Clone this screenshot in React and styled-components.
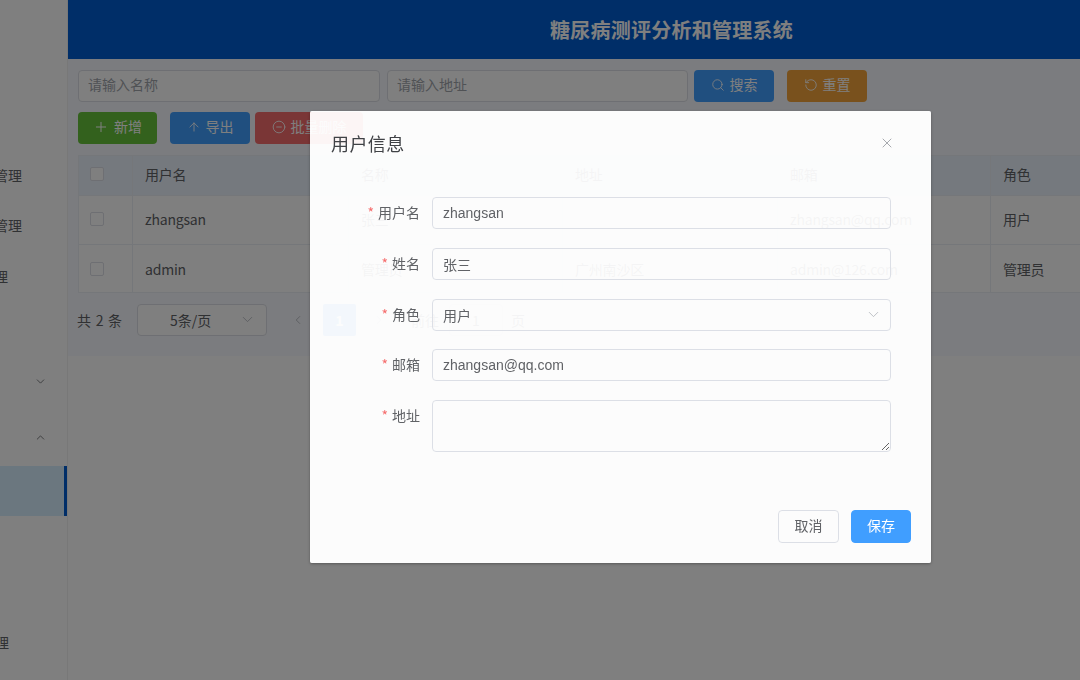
import React from 'react';
import styled, { createGlobalStyle } from 'styled-components';
import { Plus, ArrowUp, CircleMinus, Search, RotateCcw, ChevronDown, ChevronUp, ChevronLeft, ChevronRight, X } from 'lucide-react';

const Global = createGlobalStyle`
  html, body { margin: 0; padding: 0; width: 1080px; height: 680px; overflow: hidden; background: #fff; }
  * { box-sizing: border-box; }
  body, input, textarea, button { font-family: "Noto Sans CJK SC", "Noto Sans", sans-serif; }
`;

const Page = styled.div`display: flex; width: 1080px; height: 680px; overflow: hidden;`;

const Sidebar = styled.aside`
  flex: 0 0 68px; height: 680px; padding-top: 151px; background: #fff; border-right: 1px solid #f0f0f0;
  overflow: hidden; color: #606266; font-size: 14px;
`;
const MenuItem = styled.div`
  display: flex; align-items: center; justify-content: flex-end; white-space: nowrap;
  height: ${p => p.$h || 50}px; margin-top: ${p => p.$top || 0}px;
  padding: 0 ${p => p.$pr || 0}px ${p => p.$pb || 0}px 0;
  ${p => p.$active && 'background: #d6efff; border-right: 3px solid #005cd0;'}
`;

const Main = styled.main`flex: 1; min-width: 0; display: flex; flex-direction: column;`;
const Header = styled.header`
  flex: 0 0 59px; display: flex; align-items: center; justify-content: center; padding: 0 0 1px 195px;
  background: #005cd0; color: #fff; font-size: 20px; font-weight: 700; letter-spacing: .25px; white-space: nowrap;
`;
const Content = styled.section`
  background: #f7f9fe; height: 297px; padding: 11px 0 0 10px; overflow: hidden;
`;
const SearchRow = styled.div`display: flex; align-items: center; height: 32px;`;
const PageInput = styled.input`
  flex: 0 0 ${p => p.$w}px; height: 32px; margin-right: ${p => p.$mr}px; padding: 0 9px 5px;
  border: 1px solid #dcdfe6; border-radius: 4px; background: #fff; font-size: 14px; color: #606266; outline: none;
  &::placeholder { color: #a0a4ab; }
`;
const Btn = styled.button`
  display: inline-flex; align-items: center; justify-content: center; gap: 5px;
  height: 32px; width: ${p => p.$w}px; margin-right: ${p => p.$mr || 0}px; padding: 0 0 5px;
  border: 0; border-radius: 4px; background: ${p => p.$bg}; color: #fff; font-size: 14px; white-space: nowrap;
  & > svg { margin-top: 3px; }
`;
const ActionRow = styled(SearchRow)`margin-top: 10px;`;

const Table = styled.div`
  margin-top: 11px; width: 1126px; display: grid; grid-template-columns: 54px 216px 214px 215px 213px 214px;
  border-top: 1px solid #ebeef5; border-left: 1px solid #ebeef5; color: #606266; font-size: 14px;
`;
const Cell = styled.div`
  display: flex; align-items: center; height: ${p => p.$h}px; padding: 0 12px ${p => p.$pb}px;
  background: ${p => p.$head ? '#eaf3fd' : '#fff'};
  border-right: 1px solid #ebeef5; border-bottom: 1px solid #ebeef5; white-space: nowrap; letter-spacing: -.2px;
`;
const Check = styled.span`
  display: block; width: 14px; height: 14px; margin: 0 0 0 -1px; border: 1px solid #dcdfe6; border-radius: 2px; background: #fff;
`;

const Pager = styled.div`display: flex; align-items: center; height: 32px; margin-top: 11px; color: #606266; font-size: 14px;`;
const Total = styled.span`flex: 0 0 60px; margin: 0 0 1px -1px; white-space: nowrap; word-spacing: 1.5px;`;
const SizeSelect = styled.div`
  flex: 0 0 130px; height: 32px; display: flex; align-items: center; justify-content: space-between;
  padding: 0 10px 1px 32px; border: 1px solid #dcdfe6; border-radius: 4px; background: #fff;
`;
const Arrow = styled.span`display: flex; color: #b4b7bd; margin: 0 ${p => p.$mx}px 0 ${p => p.$ml}px;`;
const PageNo = styled.span`
  flex: 0 0 33px; height: 32px; display: flex; align-items: center; justify-content: center;
  background: #409eff; color: #fff; border-radius: 2px; font-weight: 700;
`;
const Jump = styled.span`margin: 0 ${p => p.$mr}px 1px 0; white-space: nowrap;`;
const JumpBox = styled.span`
  flex: 0 0 54px; height: 32px; display: flex; align-items: center; justify-content: center; padding-bottom: 1px;
  border: 1px solid #dcdfe6; border-radius: 4px; margin-right: 8px;
`;
const Rest = styled.div`flex: 1; background: #fff;`;

const Overlay = styled.div`position: fixed; inset: 0; background: rgba(0, 0, 0, .5);`;
const Dialog = styled.div`
  margin: 111px 0 0 310px; width: 621px; height: 452px; display: flex; flex-direction: column;
  padding: 20px; border-radius: 2px;
  background: rgba(255, 255, 255, .94); backdrop-filter: brightness(1.61);
  box-shadow: 0 1px 3px rgba(0, 0, 0, .3); color: #606266; font-size: 14px;
`;
const DialogHead = styled.div`
  display: flex; align-items: center; justify-content: space-between; height: 25px; padding-left: 1px;
  color: #404246; font-size: 18px; line-height: 25px; letter-spacing: .4px;
`;
const Close = styled.span`display: flex; color: #909399; margin: 0 16px 2px 0;`;
const Form = styled.div`display: flex; flex-direction: column; margin-top: 41px; padding-right: 20px;`;
const FormRow = styled.div`display: flex; align-items: ${p => p.$top ? 'flex-start' : 'center'}; margin-bottom: ${p => p.$mb}px;`;
const Label = styled.label`
  flex: 0 0 90px; margin-right: 12px; text-align: right; line-height: 30px; height: 32px; font-size: 14px; white-space: nowrap;
  &::before { content: "*"; color: #f56c6c; margin-right: 4px; }
`;
const Field = styled.input`
  flex: 1; min-width: 0; height: 32px; padding: 0 10px 1px; background: transparent;
  border: 1px solid #dcdfe6; border-radius: 4px; font-size: 14px; color: #606266; outline: none;
  font-family: "Liberation Sans", "Noto Sans CJK SC", sans-serif;
`;
const Selector = styled.div`
  flex: 1; height: 32px; display: flex; align-items: center; justify-content: space-between; padding: 0 8px 1px 10px;
  border: 1px solid #dcdfe6; border-radius: 4px; color: #606266;
`;
const Area = styled.textarea`
  flex: 1; min-width: 0; height: 52px; padding: 5px 10px; background: transparent; display: block;
  border: 1px solid #dcdfe6; border-radius: 4px; outline: none;
`;
const Footer = styled.div`display: flex; justify-content: flex-end; align-items: center; gap: 12px; margin-top: auto;`;
const FootBtn = styled.button`
  width: ${p => p.$w}px; height: 33px; padding: 0 0 3px; border-radius: 4px; font-size: 14px;
  border: 1px solid ${p => p.$primary ? '#409eff' : '#dcdfe6'};
  background: ${p => p.$primary ? '#409eff' : 'transparent'}; color: ${p => p.$primary ? '#fff' : '#606266'};
`;

const ic = { size: 14, strokeWidth: 1.5 };
const heads = ['用户名', '名称', '地址', '邮箱', '角色'];
const rows = [
  ['zhangsan', '张三', '', 'zhangsan@qq.com', '用户'],
  ['admin', '管理员', '广州南沙区', 'admin@126.com', '管理员'],
];

export default function App() {
  return (
    <>
      <Global />
      <Page>
        <Sidebar>
          <MenuItem $pr={45} $pb={2}>用户管理</MenuItem>
          <MenuItem $pr={45} $pb={2}>角色管理</MenuItem>
          <MenuItem $pr={59}>日志管理</MenuItem>
          <MenuItem $top={55} $pr={20}><ChevronDown size={13} strokeWidth={1.5} /></MenuItem>
          <MenuItem $top={6} $pr={20}><ChevronUp size={13} strokeWidth={1.5} /></MenuItem>
          <MenuItem $active $top={4} />
          <MenuItem $top={102} $pr={58} $pb={2}>数据管理</MenuItem>
        </Sidebar>
        <Main>
          <Header>糖尿病测评分析和管理系统</Header>
          <Content>
            <SearchRow>
              <PageInput $w={302} $mr={7} placeholder="请输入名称" />
              <PageInput $w={301} $mr={6} placeholder="请输入地址" />
              <Btn $w={80} $mr={13} $bg="#409eff"><Search {...ic} />搜索</Btn>
              <Btn $w={80} $bg="#f2a33a"><RotateCcw {...ic} />重置</Btn>
            </SearchRow>
            <ActionRow>
              <Btn $w={79} $mr={13} $bg="#67c23a"><Plus size={16} strokeWidth={1.5} />新增</Btn>
              <Btn $w={80} $mr={5} $bg="#409eff"><ArrowUp {...ic} />导出</Btn>
              <Btn $w={108} $bg="#f56c6c"><CircleMinus {...ic} />批量删除</Btn>
            </ActionRow>
            <Table>
              <Cell $head $h={40} $pb={4}><Check /></Cell>
              {heads.map(h => <Cell $head $h={40} $pb={4} key={h}>{h}</Cell>)}
              {rows.map((r, i) => (
                <React.Fragment key={i}>
                  <Cell $h={i ? 48 : 49} $pb={i ? 0 : 3}><Check /></Cell>
                  {r.map((c, j) => <Cell $h={i ? 48 : 49} $pb={i ? 0 : 3} key={j}>{c}</Cell>)}
                </React.Fragment>
              ))}
            </Table>
            <Pager>
              <Total>共 2 条</Total>
              <SizeSelect>5条/页<ChevronDown size={17} strokeWidth={1.2} color="#b4b7bd" /></SizeSelect>
              <Arrow $ml={24} $mx={18}><ChevronLeft {...ic} /></Arrow>
              <PageNo>1</PageNo>
              <Arrow $ml={16} $mx={25}><ChevronRight {...ic} /></Arrow>
              <Jump $mr={10}>前往</Jump>
              <JumpBox>1</JumpBox>
              <Jump $mr={0}>页</Jump>
            </Pager>
          </Content>
          <Rest />
        </Main>
      </Page>
      <Overlay>
        <Dialog>
          <DialogHead>用户信息<Close><X size={16} strokeWidth={1.2} /></Close></DialogHead>
          <Form>
            <FormRow $mb={19}><Label>用户名</Label><Field readOnly value="zhangsan" /></FormRow>
            <FormRow $mb={19}><Label>姓名</Label><Field readOnly value="张三" /></FormRow>
            <FormRow $mb={18}><Label>角色</Label><Selector>用户<ChevronDown size={17} strokeWidth={1.2} color="#b4b7bd" /></Selector></FormRow>
            <FormRow $mb={19}><Label>邮箱</Label><Field readOnly value="zhangsan@qq.com" /></FormRow>
            <FormRow $top $mb={0}><Label>地址</Label><Area readOnly /></FormRow>
          </Form>
          <Footer>
            <FootBtn $w={61}>取消</FootBtn>
            <FootBtn $w={60} $primary>保存</FootBtn>
          </Footer>
        </Dialog>
      </Overlay>
    </>
  );
}
